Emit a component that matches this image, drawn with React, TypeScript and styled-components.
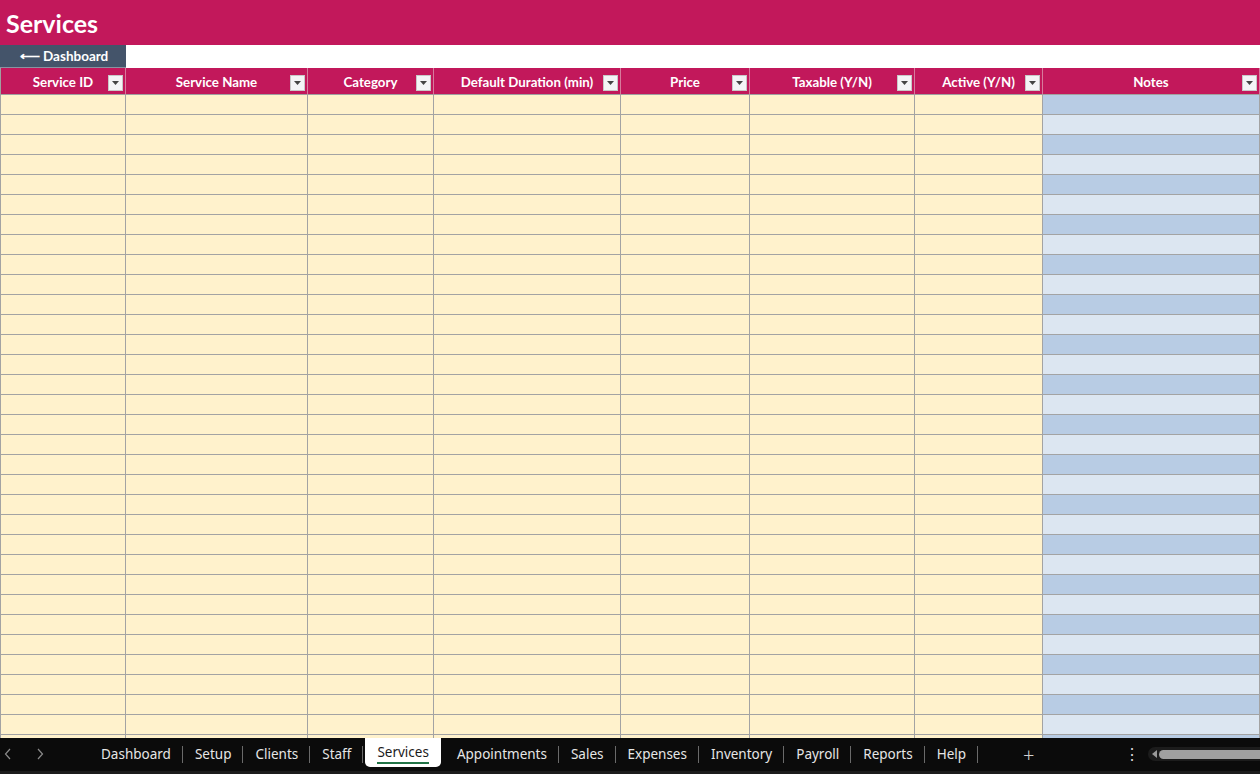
import { createGlobalStyle, styled } from 'styled-components'

const columns = [
  { name: 'Service ID', width: 126 },
  { name: 'Service Name', width: 182 },
  { name: 'Category', width: 126 },
  { name: 'Default Duration (min)', width: 187 },
  { name: 'Price', width: 129 },
  { name: 'Taxable (Y/N)', width: 165 },
  { name: 'Active (Y/N)', width: 128 },
  { name: 'Notes', width: 217 },
]

const tabs = ['Dashboard', 'Setup', 'Clients', 'Staff', 'Services', 'Appointments', 'Sales', 'Expenses', 'Inventory', 'Payroll', 'Reports', 'Help']

const template = columns.map((c) => c.width + 'px').join(' ')
const rows = Array.from({ length: 33 }, (_, i) => i)

const App = () => {
  return (
    <Page>
      <Global />
      <Title>Services</Title>
      <NavRow>
        <BackButton>⟵ Dashboard</BackButton>
      </NavRow>
      <HeaderRow $cols={template}>
        {columns.map((c) => (
          <HeadCell key={c.name}>
            <span>{c.name}</span>
            <Filter>
              <svg width="7" height="4" viewBox="0 0 7 4">
                <path d="M0 0h7L3.5 4z" fill="#444" />
              </svg>
            </Filter>
          </HeadCell>
        ))}
      </HeaderRow>
      <Body>
        {rows.map((r) => (
          <DataRow key={r} $cols={template}>
            {columns.map((c, i) => (
              <Cell key={c.name} $notes={i === columns.length - 1} $alt={r % 2 === 1} $first={i === 0} />
            ))}
          </DataRow>
        ))}
      </Body>
      <TabBar>
        <Arrows>
          <svg width="8" height="12" viewBox="0 0 8 12">
            <path d="M6 1L1.5 6 6 11" fill="none" stroke="#8a8a8a" strokeWidth="1.2" />
          </svg>
          <svg width="8" height="12" viewBox="0 0 8 12">
            <path d="M2 1l4.5 5L2 11" fill="none" stroke="#8a8a8a" strokeWidth="1.2" />
          </svg>
        </Arrows>
        <Tabs>
          {tabs.map((t) => (
            <Tab key={t} $active={t === 'Services'}>
              <TabLabel $active={t === 'Services'}>{t}</TabLabel>
            </Tab>
          ))}
        </Tabs>
        <AddTab>+</AddTab>
        <More>⋮</More>
        <Scroll>
          <ScrollArrow />
          <Thumb />
        </Scroll>
      </TabBar>
    </Page>
  )
}

export default App

const Global = createGlobalStyle`
body {
  margin: 0;
  overflow: hidden;
  background: #fff;
}
* {
  box-sizing: border-box;
}
`
const Page = styled.div`
width: 1260px;
height: 774px;
display: flex;
flex-direction: column;
overflow: hidden;
font-family: Lato, "Open Sans", sans-serif;
`
const Title = styled.div`
height: 45px;
background-color: #c2185b;
color: #fff;
font-size: 25px;
font-weight: 700;
padding-left: 6px;
display: flex;
align-items: center;
`
const NavRow = styled.div`
height: 23px;
display: flex;
background: #fff;
`
const BackButton = styled.div`
width: 126px;
background-color: #44546a;
color: #fff;
font-size: 13.5px;
font-weight: 700;
display: flex;
align-items: center;
justify-content: center;
padding-left: 2px;
border-bottom: 1px solid #8a93a0;
`
const HeaderRow = styled.div<{ $cols: string }>`
height: 27px;
display: grid;
grid-template-columns: ${(p) => p.$cols};
background-color: #c2185b;
`
const HeadCell = styled.div`
position: relative;
display: flex;
align-items: center;
justify-content: center;
padding-top: 1px;
color: #fff;
font-size: 13.3px;
font-weight: 700;
border-right: 1px solid #d77a9c;
border-bottom: 1px solid #a0a0a0;
&:first-child {
  border-left: 1px solid #a0a0a0;
}
`
const Filter = styled.div`
position: absolute;
right: 2px;
top: 7px;
width: 15px;
height: 16px;
background: #f4f4f6;
border: 1px solid #c8c8c8;
display: flex;
align-items: center;
justify-content: center;
`
const Body = styled.div`
flex: 1;
overflow: hidden;
`
const DataRow = styled.div<{ $cols: string }>`
height: 20px;
display: grid;
grid-template-columns: ${(p) => p.$cols};
`
const Cell = styled.div<{ $notes: boolean; $alt: boolean; $first: boolean }>`
background-color: ${(p) => (p.$notes ? (p.$alt ? '#dce6f1' : '#b8cce4') : '#fff2cc')};
border-right: 1px solid #a3a3a3;
border-bottom: 1px solid #a3a3a3;
border-left: ${(p) => (p.$first ? '1px solid #a3a3a3' : 'none')};
`
const TabBar = styled.div`
height: 36px;
flex-shrink: 0;
background-color: #0b0b0b;
border-bottom: 3px solid #1b1b1b;
display: flex;
align-items: flex-start;
color: #e6e6e6;
font-family: "Noto Sans", "Open Sans", sans-serif;
`
const Arrows = styled.div`
width: 89px;
height: 32px;
display: flex;
align-items: center;
gap: 24px;
padding-left: 4px;
`
const Tabs = styled.div`
display: flex;
align-items: flex-start;
height: 32px;
`
const Tab = styled.div<{ $active: boolean }>`
position: relative;
height: ${(p) => (p.$active ? '29px' : '32px')};
padding: 0 12px;
display: flex;
align-items: center;
font-size: 13.5px;
background-color: ${(p) => (p.$active ? '#fff' : 'transparent')};
color: ${(p) => (p.$active ? '#1a1a1a' : '#e6e6e6')};
border-radius: ${(p) => (p.$active ? '0 0 5px 5px' : '0')};
margin: ${(p) => (p.$active ? '0 4px 0 2px' : '0')};
&::after {
  content: '';
  position: absolute;
  right: 0;
  top: 8px;
  height: 17px;
  width: 1px;
  background: #6a6a6a;
  display: ${(p) => (p.$active ? 'none' : 'block')};
}
`
const TabLabel = styled.span<{ $active: boolean }>`
padding-bottom: ${(p) => (p.$active ? '1px' : '0')};
border-bottom: ${(p) => (p.$active ? '2px solid #217346' : 'none')};
margin-top: ${(p) => (p.$active ? '2px' : '0')};
`
const AddTab = styled.div`
margin-left: 45px;
height: 32px;
display: flex;
align-items: center;
font-size: 20px;
font-weight: 300;
color: #d0d0d0;
`
const More = styled.div`
margin-left: 89px;
height: 32px;
display: flex;
align-items: center;
font-size: 16px;
color: #d8d8d8;
`
const Scroll = styled.div`
margin-left: 8px;
margin-top: 9px;
flex: 1;
height: 14px;
background: #1c1c1c;
border-radius: 7px 0 0 7px;
display: flex;
align-items: center;
padding-left: 4px;
gap: 2px;
`
const ScrollArrow = styled.div`
width: 0;
height: 0;
border-top: 4px solid transparent;
border-bottom: 4px solid transparent;
border-right: 5px solid #9a9a9a;
`
const Thumb = styled.div`
flex: 1;
height: 9px;
background: #a0a0a0;
border-radius: 5px 0 0 5px;
`
